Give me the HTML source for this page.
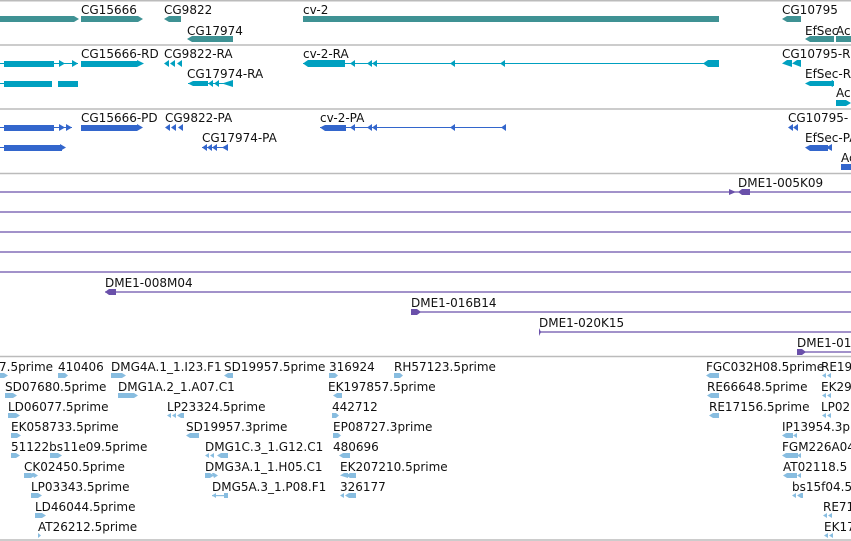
<!DOCTYPE html>
<html><head><meta charset="utf-8"><style>
html,body{margin:0;padding:0;background:#fff;width:851px;height:541px;overflow:hidden}
svg text{font-family:"DejaVu Sans","Liberation Sans",sans-serif;font-size:12px;fill:#111}
</style></head><body>
<svg width="851" height="541" xmlns="http://www.w3.org/2000/svg">
<g stroke="#bbb" stroke-width="1.5">
<line x1="0" y1="0.75" x2="851" y2="0.75"/>
<line x1="0" y1="45" x2="851" y2="45"/>
<line x1="0" y1="109" x2="851" y2="109"/>
<line x1="0" y1="173.5" x2="851" y2="173.5"/>
<line x1="0" y1="356.5" x2="851" y2="356.5"/>
<line x1="0" y1="540" x2="851" y2="540"/>
</g>
<!-- teal -->
<g fill="#3f9294">
<polygon points="0,16 74,16 79,19 74,22 0,22"/>
<polygon points="81,16 138,16 143,19 138,22 81,22"/>
<polygon points="164,19 169,16 181,16 181,22 169,22"/>
<rect x="303" y="16" width="416" height="6"/>
<polygon points="782,19 787,16 801,16 801,22 787,22"/>
<polygon points="187,39 192,36 233,36 233,42 192,42"/>
<polygon points="805,39 810,36 834,36 834,42 810,42"/>
<rect x="836" y="36" width="15" height="6"/>
</g>
<text x="81" y="14">CG15666</text><text x="164" y="14">CG9822</text><text x="303" y="14">cv-2</text><text x="782" y="14">CG10795</text>
<text x="187" y="35">CG17974</text><text x="805" y="35">EfSec</text><text x="836" y="35">Ac</text>
<!-- cyan -->
<g fill="#00a0c0" stroke="#00a0c0">
<line x1="0" y1="63.5" x2="78" y2="63.5" stroke-width="1"/>
<line x1="303" y1="63.5" x2="719" y2="63.5" stroke-width="1"/>
<line x1="188" y1="83.5" x2="233" y2="83.5" stroke-width="1"/>
<line x1="0" y1="83.5" x2="10" y2="83.5" stroke-width="1"/>
<g stroke="none">
<rect x="4" y="61" width="50" height="6"/><polygon points="59,60 65,63.5 59,67"/><polygon points="72,60 78,63.5 72,67"/>
<rect x="81" y="61" width="56" height="6"/><polygon points="137,60 144,63.5 137,67"/>
<polygon points="164,63.5 169,60 169,67"/><polygon points="170,63.5 175,60 175,67"/><polygon points="177,63.5 182,60 182,67"/>
<polygon points="303,63.5 308,60 345,60 345,67 308,67"/>
<polygon points="350,63.5 355,60 355,67"/><polygon points="367,63.5 372,60 372,67"/><polygon points="372,63.5 377,60 377,67"/><polygon points="450,63.5 455,60 455,67"/><polygon points="500,63.5 505,60 505,67"/>
<polygon points="703,63.5 708,60 719,60 719,67 708,67"/>
<polygon points="782,63.5 787,60 792,60 792,67"/><polygon points="792,63.5 797,60 801,60 801,67"/>
<rect x="4" y="81" width="48" height="6"/><rect x="58" y="81" width="20" height="6"/>
<polygon points="188,83.5 193,81 208,81 208,86 193,86"/><polygon points="208,83.5 213,80 213,87"/><polygon points="214,83.5 219,80 219,87"/><polygon points="222,83.5 233,80 233,87"/>
<polygon points="805,83.5 810,81 834,81 834,86 810,86"/><polygon points="826,83.5 833,80 833,87"/>
<polygon points="836,100 846,100 851,103 846,106 836,106"/>
</g></g>
<text x="81" y="58">CG15666-RD</text><text x="164" y="58">CG9822-RA</text><text x="303" y="58">cv-2-RA</text><text x="782" y="58">CG10795-R</text>
<text x="187" y="78">CG17974-RA</text><text x="805" y="78">EfSec-RA</text><text x="836" y="97">Ac</text>
<!-- blue -->
<g fill="#3366cc" stroke="#3366cc">
<line x1="0" y1="127.5" x2="72" y2="127.5" stroke-width="1"/>
<line x1="320" y1="127.5" x2="506" y2="127.5" stroke-width="1"/>
<line x1="202" y1="147.5" x2="228" y2="147.5" stroke-width="1"/>
<line x1="0" y1="147.5" x2="10" y2="147.5" stroke-width="1"/>
<g stroke="none">
<rect x="4" y="125" width="50" height="6"/><polygon points="59,124 65,127.5 59,131"/><polygon points="66,124 72,127.5 66,131"/>
<rect x="81" y="125" width="56" height="6"/><polygon points="137,124 143,127.5 137,131"/>
<polygon points="165,127.5 170,124 170,131"/><polygon points="171,127.5 176,124 176,131"/><polygon points="178,127.5 183,124 183,131"/>
<polygon points="320,127.5 325,125 346,125 346,131 325,131"/>
<polygon points="350,127.5 355,124 355,131"/><polygon points="367,127.5 372,124 372,131"/><polygon points="372,127.5 377,124 377,131"/><polygon points="450,127.5 455,124 455,131"/><polygon points="501,127.5 506,124 506,131"/>
<polygon points="788,127.5 793,124 793,131"/><polygon points="793,127.5 798,124 798,131"/>
<rect x="4" y="145" width="58" height="6"/><polygon points="60,144 66,147.5 60,151"/>
<polygon points="202,147.5 207,144 207,151"/><polygon points="207,147.5 212,144 212,151"/><polygon points="212,147.5 217,144 217,151"/><polygon points="222,147.5 228,144 228,151"/>
<polygon points="805,147.5 810,145 828,145 828,151 810,151"/><polygon points="826,147.5 832,144 832,151"/>
<rect x="841" y="164" width="10" height="6"/>
</g></g>
<text x="81" y="122">CG15666-PD</text><text x="165" y="122">CG9822-PA</text><text x="320" y="122">cv-2-PA</text><text x="788" y="122">CG10795-</text>
<text x="202" y="142">CG17974-PA</text><text x="805" y="142">EfSec-PA</text><text x="841" y="162">Ac</text>
<!-- purple -->
<g stroke="#6a50aa" stroke-width="1.3">
<line x1="0" y1="192" x2="851" y2="192"/><line x1="0" y1="212" x2="851" y2="212"/><line x1="0" y1="232" x2="851" y2="232"/>
<line x1="0" y1="252" x2="851" y2="252"/><line x1="0" y1="272" x2="851" y2="272"/>
<line x1="105" y1="292" x2="851" y2="292"/><line x1="411" y1="312" x2="851" y2="312"/>
<line x1="539" y1="332" x2="851" y2="332"/><line x1="797" y1="352" x2="851" y2="352"/>
</g>
<g fill="#6a50aa">
<polygon points="729,189 736,192 729,195"/><polygon points="738,192 742,189 750,189 750,195 742,195"/>
<polygon points="105,292 109,289 116,289 116,295 109,295"/>
<rect x="411" y="309" width="6" height="6"/><polygon points="417,309 421,312 417,315"/>
<polygon points="539,328 541,332 539,336"/>
<rect x="797" y="349" width="5" height="6"/><polygon points="802,349 806,352 802,355"/>
</g>
<g>
<text x="738" y="187">DME1-005K09</text><text x="105" y="287">DME1-008M04</text><text x="411" y="307">DME1-016B14</text>
<text x="539" y="327">DME1-020K15</text><text x="797" y="347">DME1-01</text>
</g>
<!-- light blue ESTs -->
<g>
<text x="-1" y="371">7.5prime</text><text x="58" y="371">410406</text><text x="111" y="371">DMG4A.1_1.I23.F1</text><text x="224" y="371">SD19957.5prime</text><text x="329" y="371">316924</text><text x="394" y="371">RH57123.5prime</text><text x="706" y="371">FGC032H08.5prime</text><text x="821" y="371">RE19</text>
<text x="5" y="391">SD07680.5prime</text><text x="118" y="391">DMG1A.2_1.A07.C1</text><text x="328" y="391">EK197857.5prime</text><text x="707" y="391">RE66648.5prime</text><text x="821" y="391">EK29</text>
<text x="8" y="411">LD06077.5prime</text><text x="167" y="411">LP23324.5prime</text><text x="332" y="411">442712</text><text x="709" y="411">RE17156.5prime</text><text x="821" y="411">LP02</text>
<text x="11" y="431">EK058733.5prime</text><text x="186" y="431">SD19957.3prime</text><text x="333" y="431">EP08727.3prime</text><text x="782" y="431">IP13954.3p</text>
<text x="11" y="451">51122bs11e09.5prime</text><text x="205" y="451">DMG1C.3_1.G12.C1</text><text x="333" y="451">480696</text><text x="782" y="451">FGM226A04</text>
<text x="24" y="471">CK02450.5prime</text><text x="205" y="471">DMG3A.1_1.H05.C1</text><text x="340" y="471">EK207210.5prime</text><text x="783" y="471">AT02118.5</text>
<text x="31" y="491">LP03343.5prime</text><text x="212" y="491">DMG5A.3_1.P08.F1</text><text x="340" y="491">326177</text><text x="792" y="491">bs15f04.5</text>
<text x="35" y="511">LD46044.5prime</text><text x="823" y="511">RE71</text>
<text x="38" y="531">AT26212.5prime</text><text x="824" y="531">EK17</text>
</g>
<g fill="#88bde0">
<polygon points="0,373 4,373 8,375.5 4,378 0,378"/><polygon points="58,373 65,373 68,375.5 65,378 58,378"/><polygon points="111,373 120,373 125,375.5 120,378 111,378"/><polygon points="118,373 122,373 126,375.5 122,378 118,378"/><polygon points="224,375.5 228,373 233,373 233,378 228,378"/><polygon points="329,373 335,373 338,375.5 335,378 329,378"/><polygon points="394,373 400,373 403,375.5 400,378 394,378"/><polygon points="706,375.5 710,373 719,373 719,378 710,378"/><polygon points="822,375.5 826,373 826,378"/><polygon points="827,375.5 831,373 831,378"/>
<polygon points="5,393 13,393 17,395.5 13,398 5,398"/><polygon points="118,393 126,393 130,395.5 126,398 118,398"/><polygon points="126,393 134,393 138,395.5 134,398 126,398"/><polygon points="333,395.5 337,393 342,393 342,398 337,398"/><polygon points="707,395.5 711,393 719,393 719,398 711,398"/><polygon points="822,395.5 826,393 826,398"/><polygon points="827,395.5 831,393 831,398"/>
<polygon points="8,413 16,413 20,415.5 16,418 8,418"/><polygon points="167,415.5 171,413 171,418"/><polygon points="172,415.5 176,413 176,418"/><polygon points="177,415.5 181,413 184,413 184,418 181,418"/><polygon points="332,413 336,413 339,415.5 336,418 332,418"/><polygon points="709,415.5 713,413 719,413 719,418 713,418"/><polygon points="822,415.5 826,413 826,418"/><polygon points="827,415.5 831,413 831,418"/>
<polygon points="11,433 17,433 21,435.5 17,438 11,438"/><polygon points="186,435.5 190,433 199,433 199,438 190,438"/><polygon points="333,433 338,433 341,435.5 338,438 333,438"/><polygon points="782,435.5 786,433 793,433 793,438 786,438"/><polygon points="793,435.5 797,433 797,438"/>
<polygon points="11,453 16,453 20,455.5 16,458 11,458"/><polygon points="50,453 58,453 62,455.5 58,458 50,458"/><polygon points="205,455.5 209,453 209,458"/><polygon points="210,455.5 214,453 214,458"/><polygon points="217,455.5 221,453 228,453 228,458 221,458"/><polygon points="339,455.5 343,453 350,453 350,458 343,458"/><polygon points="782,455.5 786,453 798,453 798,458 786,458"/><polygon points="797,455.5 801,453 801,458"/>
<polygon points="24,473 31,473 35,475.5 31,478 24,478"/><polygon points="32,473 34,473 38,475.5 34,478"/><polygon points="205,473 210,473 214,475.5 210,478 205,478"/><polygon points="212,473 214,473 218,475.5 214,478"/><polygon points="340,475.5 344,473 348,473 348,478"/><polygon points="346,475.5 350,473 356,473 356,478 350,478"/><polygon points="783,475.5 787,473 797,473 797,478 787,478"/><polygon points="797,475.5 801,473 801,478"/>
<polygon points="31,493 38,493 42,495.5 38,498 31,498"/><polygon points="212,495.5 216,493 216,498"/><rect x="212" y="495" width="16" height="1.2"/><polygon points="224,493 228,493 228,498 224,498"/><polygon points="340,495.5 344,493 344,498"/><polygon points="345,495.5 349,493 356,493 356,498 349,498"/><polygon points="792,495.5 796,493 796,498"/><polygon points="797,495.5 801,493 803,493 803,498 801,498"/>
<polygon points="35,513 42,513 46,515.5 42,518 35,518"/><polygon points="823,515.5 827,513 827,518"/><polygon points="828,515.5 832,513 832,518"/>
<polygon points="38,533 41,535.5 38,538"/><polygon points="824,535.5 828,533 828,538"/><polygon points="829,535.5 833,533 833,538"/>
</g>
</svg>
</body></html>
